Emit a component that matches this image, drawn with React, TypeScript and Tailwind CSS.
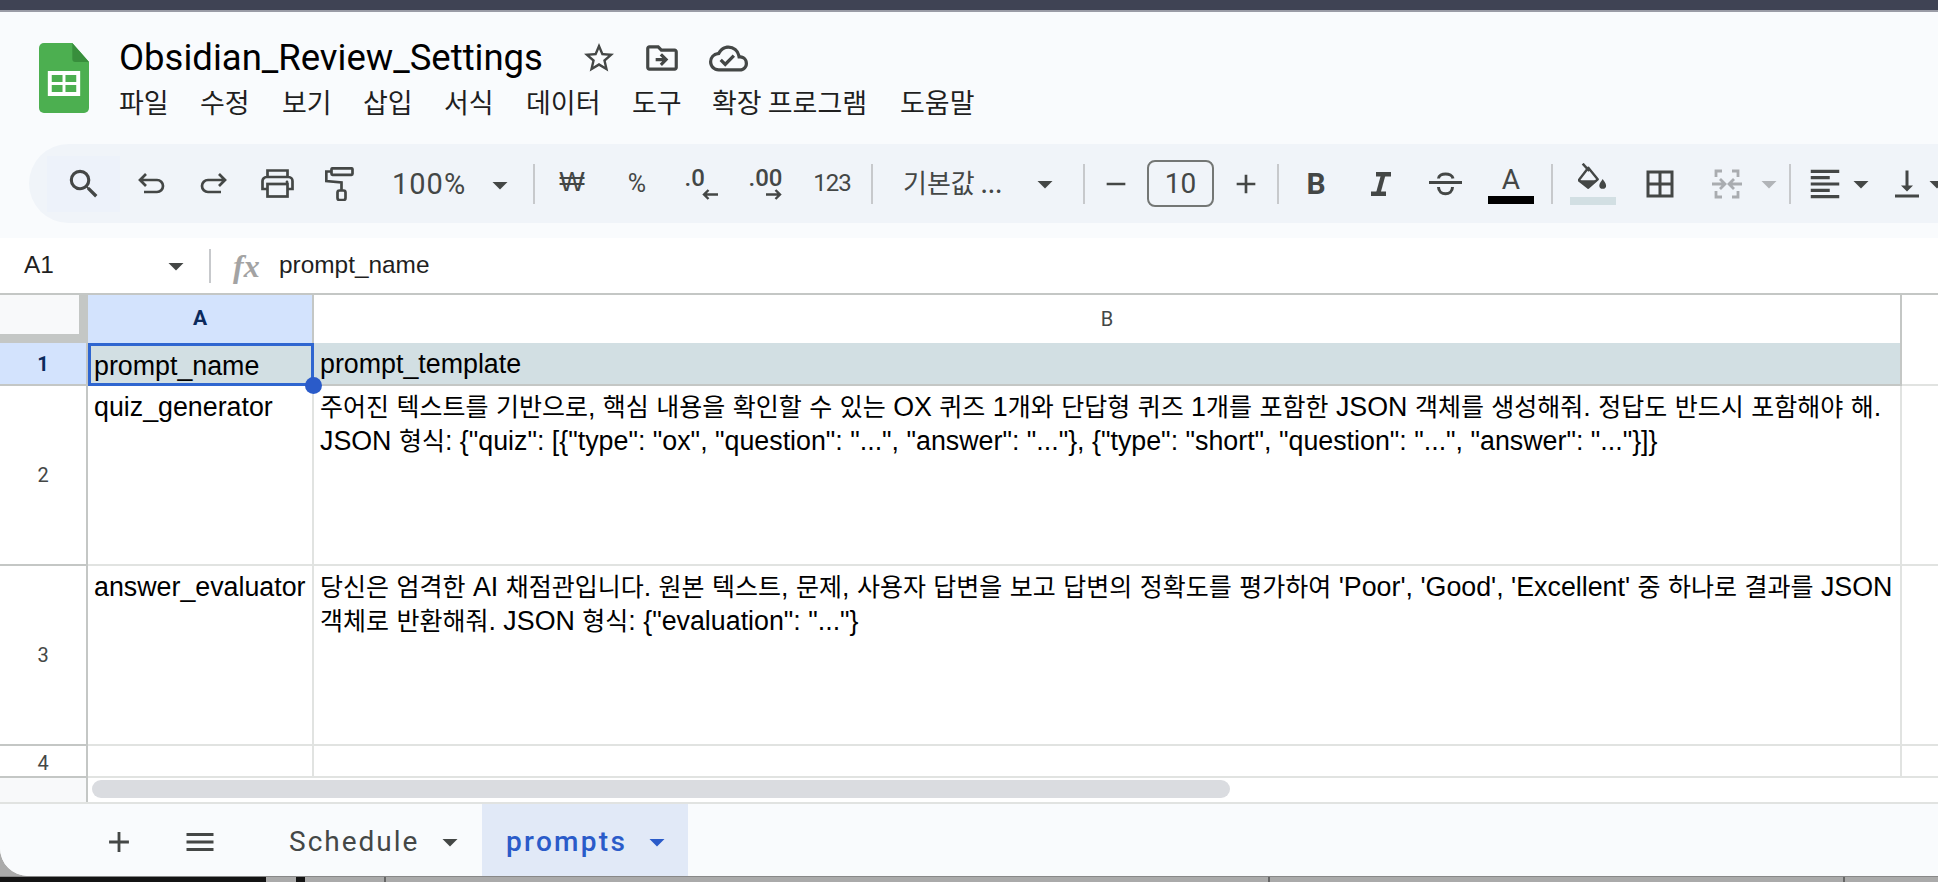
import { MdAdd, MdArrowDropDown, MdBorderAll, MdFormatAlignLeft, MdMenu, MdOutlineCloudDone, MdOutlineDriveFileMove, MdOutlineStarBorder, MdRemove, MdSearch, MdVerticalAlignBottom } from "react-icons/md";
import type { ReactNode } from "react";

const menus = [
  { label: "파일", w: "w-[81px]" },
  { label: "수정", w: "w-[82px]" },
  { label: "보기", w: "w-[81px]" },
  { label: "삽입", w: "w-[81px]" },
  { label: "서식", w: "w-[82px]" },
  { label: "데이터", w: "w-[106px]" },
  { label: "도구", w: "w-[80px]" },
  { label: "확장 프로그램", w: "w-[188px]" },
  { label: "도움말", w: "w-[90px]" },
];

function SheetsLogo() {
  return (
    <svg width="50" height="70" viewBox="0 0 51 70" preserveAspectRatio="none" className="shrink-0">
      <path d="M5 0h29l17 19v46a5 5 0 0 1-5 5H5a5 5 0 0 1-5-5V5a5 5 0 0 1 5-5z" fill="#4caf50" />
      <path d="M34 0l17 19H37a3 3 0 0 1-3-3z" fill="#388e3c" />
      <path d="M9 28h33v25H9z" fill="#fff" />
      <path d="M13 32h11v7H13zM27 32h11v7H27zM13 42h11v7H13zM27 42h11v7H27z" fill="#4caf50" />
    </svg>
  );
}

const UndoIcon = ({ flip = false }: { flip?: boolean }) => (
  <svg width="28" height="24" viewBox="0 0 28 24" fill="none" stroke="#444746" strokeWidth="2.7" className={flip ? "-scale-x-100" : ""}>
    <path d="M9 2L3 8l6 6M3 8h17a6 6 0 0 1 0 12H7" />
  </svg>
);

const PrintIcon = () => (
  <svg width="33" height="29" viewBox="0 0 33 29" fill="none" stroke="#444746" strokeWidth="2.7">
    <path d="M6.5 8V1.5h20V8M6.5 20H1.5v-8a4 4 0 0 1 4-4h22a4 4 0 0 1 4 4v8h-5" />
    <rect x="6.5" y="15" width="20" height="12.5" />
    <circle cx="26" cy="13" r="1.4" fill="#444746" stroke="none" />
  </svg>
);

const RollerIcon = () => (
  <svg width="29" height="34" viewBox="0 0 29 34" fill="none" stroke="#444746" strokeWidth="2.7">
    <rect x="6.5" y="1.3" width="21" height="6.5" rx="1" />
    <path d="M6 4.5H1.3V14l15.2 1.5V23" />
    <rect x="12.5" y="23.5" width="8" height="9.5" rx="2" />
  </svg>
);

const ItalicIcon = () => (
  <svg width="20" height="24" viewBox="0 0 20 24" fill="#444746">
    <path d="M5 0h15v4.5H5zM0 19.5h15V24H0z" />
    <path d="M12.5 2L7 22" stroke="#444746" strokeWidth="4.5" />
  </svg>
);

const StrikeIcon = () => (
  <svg width="33" height="24" viewBox="0 0 33 24" fill="none" stroke="#444746" strokeWidth="3">
    <path d="M0 10.5h33M9.5 6.5C10 .5 23 .5 24 6.5M9.5 15c0 9 14 9 14 0" />
  </svg>
);

const FillIcon = () => (
  <svg width="30" height="28" viewBox="0 0 30 28" fill="none">
    <path d="M4.7.7L11.3 8" stroke="#444746" strokeWidth="2.6" />
    <path d="M10.3 4.7l9.4 11.6-9.4 8.4-9.6-7.4z" stroke="#444746" strokeWidth="2.4" strokeLinejoin="round" />
    <path d="M.7 17.3h19l-9.4 7.4z" fill="#444746" />
    <path d="M24.7 16c-1 2-3.4 4-3.4 6.4a3.4 3.4 0 0 0 6.8 0c0-2.4-2.4-4.4-3.4-6.4z" fill="#444746" />
  </svg>
);

const DecArrow = ({ left = false }: { left?: boolean }) => (
  <svg width="16" height="11" viewBox="0 0 16 11" fill="none" stroke="#444746" strokeWidth="2.4" className={left ? "-scale-x-100" : ""}>
    <path d="M0 5.5h14M9.5 1l4.5 4.5L9.5 10" />
  </svg>
);

function Cell({ w, children, className = "" }: { w: string; children: ReactNode; className?: string }) {
  return <div className={`flex h-full shrink-0 items-center justify-center ${w} ${className}`}>{children}</div>;
}

function Divider({ className = "" }: { className?: string }) {
  return <div className={`h-[40px] w-[2px] shrink-0 bg-[#c7c9cc] ${className}`} />;
}

function Caret({ className = "text-[#444746]" }: { className?: string }) {
  return <MdArrowDropDown size={36} className={`shrink-0 ${className}`} />;
}

function Toolbar() {
  return (
    <div className="ml-[29px] flex h-[79px] items-center overflow-hidden rounded-l-[40px] bg-[#f0f4f9] pl-[18px] text-[#444746]">
      <Cell w="w-[73px]" className="!h-[56px] bg-[#edf2fa]"><MdSearch size={38} /></Cell>
      <Cell w="w-[62px]"><UndoIcon /></Cell>
      <Cell w="w-[63px]"><UndoIcon flip /></Cell>
      <Cell w="w-[64px]"><PrintIcon /></Cell>
      <Cell w="w-[60px]"><RollerIcon /></Cell>
      <div className="flex h-full w-[164px] shrink-0 items-center pl-[23px] pt-[2px] font-['Roboto',sans-serif] text-[29px] tracking-[1px]">
        <span className="w-[90px]">100%</span>
        <Caret />
      </div>
      <Divider />
      <Cell w="w-[74px]"><span className="-mt-[3px] font-['Liberation_Sans',sans-serif] text-[27px] font-medium">₩</span></Cell>
      <Cell w="w-[56px]"><span className="font-['Roboto',sans-serif] text-[25px]">%</span></Cell>
      <Cell w="w-[72px]">
        <div className="flex w-[33px] flex-col items-start font-['Roboto',sans-serif] text-[24px] font-medium leading-[22px]">
          .0
          <div className="self-end"><DecArrow left /></div>
        </div>
      </Cell>
      <Cell w="w-[56px]">
        <div className="flex w-[33px] flex-col items-start font-['Roboto',sans-serif] text-[24px] font-medium leading-[22px]">
          .00
          <div className="self-end"><DecArrow /></div>
        </div>
      </Cell>
      <Cell w="w-[78px]"><span className="-mt-[1px] font-['Roboto',sans-serif] text-[24px] tracking-[-1px]">123</span></Cell>
      <Divider />
      <div className="flex h-full w-[210px] shrink-0 items-center pl-[30px] font-['Noto_Sans_CJK_KR',sans-serif] text-[26px]">
        <span className="-mt-[4px] w-[124px]">기본값 ...</span>
        <Caret />
      </div>
      <Divider />
      <Cell w="w-[62px]"><MdRemove size={32} /></Cell>
      <div className="flex h-[47px] w-[67px] shrink-0 items-center justify-center rounded-[8px] border-2 border-[#747775] font-['Roboto',sans-serif] text-[28px]">10</div>
      <Cell w="w-[63px]"><MdAdd size={32} /></Cell>
      <Divider />
      <Cell w="w-[74px]"><span className="font-['Roboto',sans-serif] text-[30px] font-bold">B</span></Cell>
      <Cell w="w-[56px]"><ItalicIcon /></Cell>
      <Cell w="w-[72px]"><StrikeIcon /></Cell>
      <Cell w="w-[60px]" className="flex-col">
        <span className="font-['Roboto',sans-serif] text-[28px] leading-[32px]">A</span>
        <div className="h-[8px] w-[46px] bg-black" />
      </Cell>
      <Divider className="ml-[10px]" />
      <Cell w="w-[80px]" className="flex-col">
        <FillIcon />
        <div className="mt-[6px] h-[8px] w-[46px] bg-[#d2dfe3]" />
      </Cell>
      <Cell w="w-[54px]"><MdBorderAll size={36} /></Cell>
      <Cell w="w-[72px]" className="pl-[8px]">
        <svg width="32" height="30" viewBox="0 0 32 30" fill="none" stroke="#a9acb0" strokeWidth="2.8">
          <path d="M5 8V2h6M27 8V2h-6M5 22v6h6M27 22v6h-6M1 15h12M9 10l5 5-5 5M31 15H19M23 10l-5 5 5 5" />
        </svg>
      </Cell>
      <Cell w="w-[20px]"><Caret className="text-[#b1b4b8]" /></Cell>
      <Divider className="ml-[10px]" />
      <Cell w="w-[60px]" className="pl-[8px]"><MdFormatAlignLeft size={38} className="shrink-0" /></Cell>
      <Cell w="w-[20px]"><Caret /></Cell>
      <Cell w="w-[72px]"><MdVerticalAlignBottom size={36} className="shrink-0" /></Cell>
      <Cell w="w-[20px]" className="-ml-[16px]"><Caret /></Cell>
    </div>
  );
}

// hangul in the shot is a touch smaller than the latin next to it
function CellText({ text }: { text: string }) {
  return (
    <>
      {text.split(/([가-힣]+)/).map((part, i) =>
        /[가-힣]/.test(part) ? <span key={i} className="text-[25px]">{part}</span> : part
      )}
    </>
  );
}

function RowHead({ h, label, active = false, className = "" }: { h: string; label: string; active?: boolean; className?: string }) {
  return (
    <div className={`flex ${h} w-[88px] shrink-0 items-center justify-center border-r-2 border-b-2 border-[#c4c7c5] font-['Roboto',sans-serif] text-[20px] ${active ? "bg-[#d3e3fd] font-bold text-[#0b2a5c]" : "bg-white text-[#444746]"} ${className}`}>
      {label}
    </div>
  );
}

function DataRow({ h, head, name, lines, headClass }: { h: string; head: string; name: string; lines: string[]; headClass?: string }) {
  return (
    <div className={`flex ${h}`}>
      <RowHead h="h-full" label={head} className={headClass} />
      <div className="h-full w-[226px] shrink-0 border-r-2 border-b-2 border-[#e1e3e1] px-[6px] pt-[4px] leading-[34px]">{name}</div>
      <div className="h-full w-[1588px] shrink-0 border-r-2 border-b-2 border-[#e1e3e1] px-[6px] pt-[4px] leading-[34px] whitespace-nowrap">
        {lines.map((line) => <div key={line}><CellText text={line} /></div>)}
      </div>
      <div className="h-full flex-1 border-b-2 border-[#e1e3e1]" />
    </div>
  );
}

export default function App() {
  return (
    <div className="flex h-[882px] w-[1938px] flex-col overflow-hidden bg-[#aaaaaa]">
      <div className="h-[10px] shrink-0 bg-[#3f4354]" />
      <div className="h-[2px] shrink-0 bg-[#9a9ca6]" />
      <div className="flex h-[864px] shrink-0 flex-col overflow-hidden rounded-bl-[28px] bg-white">
        <div className="h-[226px] shrink-0 bg-[#f9fbfd]">
          <div className="flex h-[132px] pl-[39px] pt-[31px]">
            <SheetsLogo />
            <div className="ml-[30px]">
              <div className="flex h-[30px] items-center">
                <span className="font-['Roboto',sans-serif] text-[36.5px] leading-none text-black">Obsidian_Review_Settings</span>
                <MdOutlineStarBorder size={36} className="ml-[38px] shrink-0 text-[#444746]" />
                <MdOutlineDriveFileMove size={38} className="ml-[26px] shrink-0 text-[#444746]" />
                <MdOutlineCloudDone size={39} className="ml-[28px] shrink-0 text-[#444746]" />
              </div>
              <div className="mt-[11px] flex h-[36px] items-center font-['Noto_Sans_CJK_KR',sans-serif] text-[27px] text-[#1f1f1f]">
                {menus.map((m) => <div key={m.label} className={m.w}>{m.label}</div>)}
              </div>
            </div>
          </div>
          <Toolbar />
        </div>
        <div className="flex h-[57px] shrink-0 items-center border-b-2 border-[#c4c7c5] font-['Liberation_Sans','Noto_Sans_CJK_KR',sans-serif] text-[24.4px] text-[#1f1f1f]">
          <div className="w-[158px] pl-[24px]">A1</div>
          <Caret />
          <div className="ml-[15px] h-[34px] w-[2px] bg-[#c7c9cc]" />
          <span className="ml-[22px] w-[46px] font-['Liberation_Serif',serif] text-[32px] font-bold italic text-[#a3a3a3]">fx</span>
          <span>prompt_name</span>
        </div>
        <div className="flex-1 font-['Liberation_Sans','Noto_Sans_CJK_KR',sans-serif] text-[26.8px] text-black">
          <div className="flex h-[48px]">
            <div className="h-full w-[88px] shrink-0 border-r-[9px] border-b-[9px] border-[#c4c7c5] bg-[#f8f9fa]" />
            <div className="flex h-full w-[226px] shrink-0 items-center justify-center border-r-2 border-[#c4c7c5] bg-[#d3e3fd] font-['Roboto',sans-serif] text-[21px] font-bold text-[#0b2a5c]">A</div>
            <div className="flex h-full w-[1588px] shrink-0 items-center justify-center border-r-2 border-[#c4c7c5] font-['Roboto',sans-serif] text-[20px] text-[#444746]">B</div>
          </div>
          <div className="flex h-[43px]">
            <RowHead h="h-full" label="1" active />
            <div className="relative h-full w-[226px] shrink-0 border-[3px] border-[#2f66d0] bg-[#d2dfe3] pl-[3px] leading-[40px]">
              prompt_name
              <div className="absolute -right-[11px] -bottom-[11px] h-[17px] w-[17px] rounded-full bg-[#2a5bc9]" />
            </div>
            <div className="h-full w-[1588px] shrink-0 border-r-2 border-b-2 border-[#c4c7c5] bg-[#d2dfe3] pl-[6px] leading-[43px]">prompt_template</div>
            <div className="h-full flex-1 border-b-2 border-[#e1e3e1]" />
          </div>
          <DataRow
            h="h-[180px]"
            head="2"
            name="quiz_generator"
            lines={[
              "주어진 텍스트를 기반으로, 핵심 내용을 확인할 수 있는 OX 퀴즈 1개와 단답형 퀴즈 1개를 포함한 JSON 객체를 생성해줘. 정답도 반드시 포함해야 해.",
              'JSON 형식: {"quiz": [{"type": "ox", "question": "...", "answer": "..."}, {"type": "short", "question": "...", "answer": "..."}]}',
            ]}
          />
          <DataRow
            h="h-[180px]"
            head="3"
            name="answer_evaluator"
            lines={[
              "당신은 엄격한 AI 채점관입니다. 원본 텍스트, 문제, 사용자 답변을 보고 답변의 정확도를 평가하여 'Poor', 'Good', 'Excellent' 중 하나로 결과를 JSON",
              '객체로 반환해줘. JSON 형식: {"evaluation": "..."}',
            ]}
          />
          <DataRow h="h-[32px]" head="4" name="" lines={[]} headClass="pt-[4px]" />
          <div className="flex h-[24px]">
            <div className="h-full w-[88px] shrink-0 border-r-2 border-[#c4c7c5] bg-[#f8f9fa]" />
            <div className="ml-[4px] mt-[2px] h-[18px] w-[1138px] rounded-full bg-[#dadce0]" />
          </div>
          <div className="flex h-[74px] items-center border-t-2 border-[#e1e3e1] bg-[#f9fbfd] pt-[3px] text-[#444746]">
            <MdAdd size={34} className="ml-[102px] shrink-0" />
            <MdMenu size={36} className="ml-[46px] shrink-0" />
            <div className="ml-[71px] flex h-full w-[193px] shrink-0 items-center font-['Roboto',sans-serif] text-[28px] tracking-[2px]">
              <span className="w-[143px]">Schedule</span>
              <Caret />
            </div>
            <div className="-mt-[3px] flex h-[72px] w-[206px] shrink-0 items-center bg-[#e1e9f7] pl-[24px] pt-[3px] font-['Roboto',sans-serif] text-[28px] font-medium tracking-[2.3px] text-[#2a5bc9]">
              <span className="w-[133px]">prompts</span>
              <Caret className="text-[#2a5bc9]" />
            </div>
          </div>
        </div>
      </div>
      <div className="flex h-[6px] shrink-0 border-t border-[#888888]">
        <div className="w-[266px] bg-[#141414]" />
        <div className="w-[30px] bg-[#aaaaaa]" />
        <div className="w-[9px] bg-[#141414]" />
        <div className="w-[81px] border-r-2 border-[#666666]" />
        <div className="w-[884px] border-r-2 border-[#666666]" />
        <div className="w-[575px] border-r-2 border-[#666666]" />
      </div>
    </div>
  );
}
